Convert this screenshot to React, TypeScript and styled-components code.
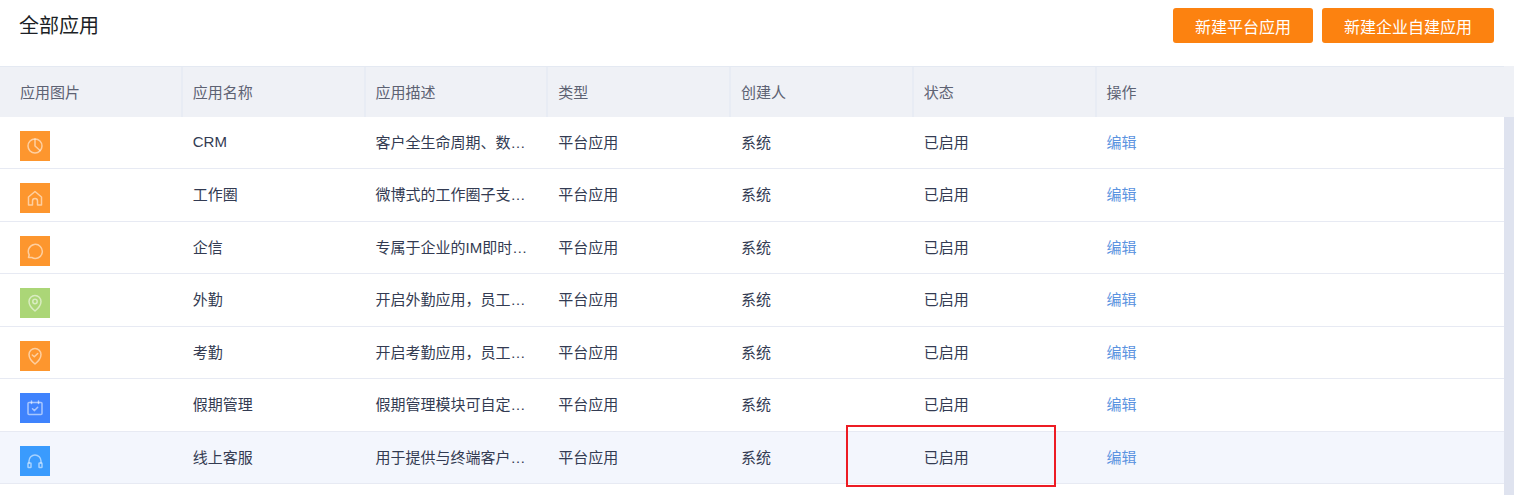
import React from 'react';
import styled, { createGlobalStyle } from 'styled-components';

const GlobalStyle = createGlobalStyle`
  html, body {
    margin: 0;
    padding: 0;
    background: #fff;
    overflow: hidden;
  }
  * {
    box-sizing: border-box;
  }
`;

const Page = styled.div`
  position: relative;
  width: 1514px;
  height: 495px;
  overflow: hidden;
  background: #fff;
  color: #333b52;
  font-family: 'Liberation Sans', 'Noto Sans CJK SC', sans-serif;
  font-size: 15px;
`;

const TopBar = styled.div`
  height: 66px;
  display: flex;
  justify-content: space-between;
  align-items: flex-start;
  padding: 8px 20px 0 19px;
`;

const PageTitle = styled.h1`
  margin: 0;
  font-size: 20px;
  font-weight: 400;
  line-height: 36px;
  color: #1c1f26;
`;

const Actions = styled.div`
  display: flex;
  gap: 9px;
`;

const ActionButton = styled.button`
  height: 35px;
  padding: 0 22px;
  border: none;
  border-radius: 3px;
  background: #fc8210;
  color: #fff;
  font: inherit;
  font-size: 16px;
`;

const Columns = styled.div`
  display: grid;
  grid-template-columns: repeat(7, 182.75px) 1fr;
`;

const HeaderRow = styled(Columns)`
  height: 50.5px;
  padding-top: 1px;
  background: linear-gradient(#e4e9f2, #e4e9f2) no-repeat 0 0 / 1504px 1px, #eff1f6;
  color: #5d6273;
`;

const HeaderCell = styled.div`
  display: flex;
  align-items: center;
  padding-left: 10px;
  border-right: 2px solid #e8ecf4;

  &:first-child {
    padding-left: 20px;
  }

  &:nth-child(n + 7) {
    border-right: none;
  }
`;

const Body = styled.div`
  display: flex;
`;

const Rows = styled.div`
  flex: 1;
  min-width: 0;
`;

const Scrollbar = styled.div`
  width: 10px;
  height: 378px;
  background: #dfe3ef;
`;

const Row = styled(Columns)<{ $active?: boolean }>`
  height: 52.5px;
  border-bottom: 1px solid #e7eaf3;
  background: ${(p) => (p.$active ? '#f3f6fd' : '#fff')};
`;

const Cell = styled.div`
  display: flex;
  align-items: center;
  min-width: 0;
  padding-left: 10px;
  padding-bottom: 2px;

  &:first-child {
    padding-left: 20px;
    padding-top: 7px;
    padding-bottom: 0;
  }
`;

const EditLink = styled.a`
  color: #5b93e0;
  cursor: pointer;
`;

const AppIcon = styled.div<{ $bg: string }>`
  width: 30px;
  height: 30px;
  display: flex;
  align-items: center;
  justify-content: center;
  background: ${(p) => p.$bg};
`;

const Glyph = styled.svg`
  width: 20px;
  height: 20px;
  fill: none;
  stroke: rgba(255, 255, 255, 0.55);
  stroke-width: 1.5;
  stroke-linecap: round;
  stroke-linejoin: round;
`;

const Highlight = styled.div`
  position: absolute;
  left: 846px;
  top: 425px;
  width: 210px;
  height: 62px;
  border: 2px solid #ed1c24;
  pointer-events: none;
`;

const icons: Record<string, React.ReactNode> = {
  pie: (
    <>
      <circle cx="10" cy="10" r="7" />
      <path d="M10 3v7l5 4.500" />
    </>
  ),
  home: <path d="M3.500 9 10 3.500l6.500 5.500v8h-4v-4a2.500 2.500 0 0 0-5 0v4h-4z" />,
  chat: <path d="M3.500 16.500l.7-2.700a7 7 0 1 1 2.700 2.700z" />,
  pin: (
    <>
      <path d="M10 18s-6-4.800-6-9.500a6 6 0 0 1 12 0C16 13.200 10 18 10 18z" />
      <circle cx="10" cy="8.500" r="2.200" />
    </>
  ),
  pinCheck: (
    <>
      <path d="M10 18s-6-4.800-6-9.500a6 6 0 0 1 12 0C16 13.200 10 18 10 18z" />
      <path d="M7.300 9l2 1.800 3.400-3.300" />
    </>
  ),
  calendar: (
    <>
      <rect x="3" y="4.500" width="14" height="12" rx="1" />
      <path d="M6.500 3v2.500M13.500 3v2.500M7.500 10.800l2 1.800 3.200-3.300" />
    </>
  ),
  headset: (
    <>
      <path d="M4 12v-2a6 6 0 0 1 12 0v2" />
      <rect x="3" y="12" width="3" height="4.500" rx=".6" />
      <rect x="14" y="12" width="3" height="4.500" rx=".6" />
    </>
  ),
};

const apps = [
  { icon: 'pie', bg: '#fd962e', name: 'CRM', desc: '客户全生命周期、数…' },
  { icon: 'home', bg: '#fd962e', name: '工作圈', desc: '微博式的工作圈子支…' },
  { icon: 'chat', bg: '#fd962e', name: '企信', desc: '专属于企业的IM即时…' },
  { icon: 'pin', bg: '#abd677', name: '外勤', desc: '开启外勤应用\uFF0C员工…' },
  { icon: 'pinCheck', bg: '#fd962e', name: '考勤', desc: '开启考勤应用\uFF0C员工…' },
  { icon: 'calendar', bg: '#3f83fd', name: '假期管理', desc: '假期管理模块可自定…' },
  { icon: 'headset', bg: '#3a9bfd', name: '线上客服', desc: '用于提供与终端客户…' },
];

const headers = ['应用图片', '应用名称', '应用描述', '类型', '创建人', '状态', '操作', ''];

const App: React.FC = () => {
  return (
    <Page>
      <GlobalStyle />
      <TopBar>
        <PageTitle>全部应用</PageTitle>
        <Actions>
          <ActionButton>新建平台应用</ActionButton>
          <ActionButton>新建企业自建应用</ActionButton>
        </Actions>
      </TopBar>
      <HeaderRow>
        {headers.map((h, i) => (
          <HeaderCell key={i}>{h}</HeaderCell>
        ))}
      </HeaderRow>
      <Body>
        <Rows>
          {apps.map((app, i) => (
            <Row key={app.name} $active={i === apps.length - 1}>
              <Cell>
                <AppIcon $bg={app.bg}>
                  <Glyph viewBox="0 0 20 20">{icons[app.icon]}</Glyph>
                </AppIcon>
              </Cell>
              <Cell>{app.name}</Cell>
              <Cell>{app.desc}</Cell>
              <Cell>平台应用</Cell>
              <Cell>系统</Cell>
              <Cell>已启用</Cell>
              <Cell>
                <EditLink>编辑</EditLink>
              </Cell>
              <Cell />
            </Row>
          ))}
        </Rows>
        <Scrollbar />
      </Body>
      <Highlight />
    </Page>
  );
};

export default App;
